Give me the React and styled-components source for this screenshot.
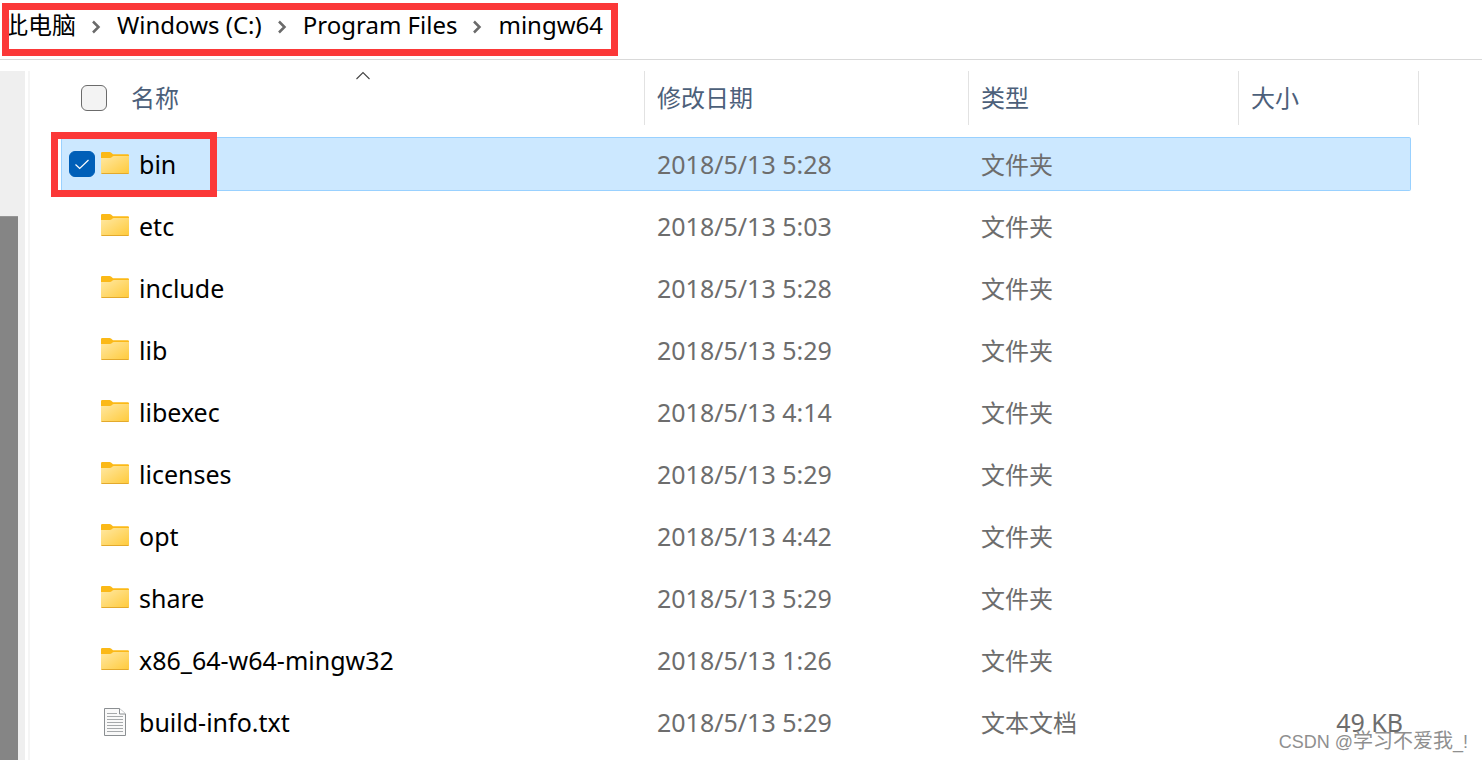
import React, { useState } from 'react';
import styled, { createGlobalStyle, css } from 'styled-components';

const GlobalStyle = createGlobalStyle`
  *, *::before, *::after { box-sizing: border-box; }
  body {
    margin: 0;
    background: #fff;
    color: #000;
    font-family: "Noto Sans", "Noto Sans CJK SC", sans-serif;
    font-size: 25px;
    line-height: 32px;
  }
`;

const RED = '#fb3838';

const Window = styled.div`
  position: relative;
  display: flex;
  flex-direction: column;
  min-height: 100vh;
  overflow: hidden;
`;

const AddressBar = styled.header`
  display: flex;
  padding: 3px 2px;
  border-bottom: 1px solid #d9d9d9;
`;

const Breadcrumb = styled.nav`
  display: flex;
  height: 53px;
  border: 7px solid ${RED};
  overflow: hidden;
`;

const Crumbs = styled.ol`
  display: flex;
  align-items: center;
  height: 30px;
  margin: 0 8px 0 -5px;
  padding: 0;
  list-style: none;
  font-size: 24px;
`;

const Crumb = styled.li`
  display: flex;
  align-items: center;
  white-space: nowrap;
`;

const CrumbLink = styled.a`
  color: #000;
  text-decoration: none;
`;

const CrumbChevron = styled.svg`
  width: 10px;
  height: 14px;
  margin: 4px 16px 0 15px;
`;

const Body = styled.div`
  display: flex;
  flex: 1;
  padding-top: 11px;
`;

const ScrollTrack = styled.div`
  display: flex;
  flex-direction: column;
  width: 25px;
  padding-top: 145px;
  background: #efefef;
`;

const ScrollThumb = styled.div`
  flex: 1;
  width: 18px;
  background: #858585;
  border-top: 1px solid #969696;
`;

const FilePane = styled.main`
  flex: 1;
  min-width: 0;
  margin-left: 3px;
  padding: 0 63px 0 31px;
  border-left: 2px solid #f5f5f5;
`;

const FileTable = styled.table`
  width: 100%;
  margin-top: -8px;
  table-layout: fixed;
  border-collapse: separate;
  border-spacing: 0 8px;
`;

const Column = styled.col`
  width: ${(p) => p.$width};
`;

const HeadCell = styled.th`
  height: 58px;
  padding: 0 0 4px;
  font-weight: 400;
  text-align: left;
`;

const HeadBox = styled.div`
  position: relative;
  display: flex;
  align-items: center;
  gap: 24px;
  height: 54px;
  padding-left: ${(p) => (p.$divider ? 12 : 0)}px;
  margin-left: ${(p) => (p.$divider ? 0 : 20)}px;
  border-left: ${(p) => (p.$divider ? '1px solid #e2e2e2' : 'none')};
`;

const EndDivider = styled.div`
  height: 54px;
  border-right: 1px solid #e2e2e2;
`;

const SortButton = styled.button`
  padding: 0;
  border: 0;
  background: none;
  color: #4c607a;
  font: inherit;
  font-size: 24px;
`;

const SortCaret = styled.svg`
  position: absolute;
  top: 0;
  left: 50%;
  width: 14px;
  height: 9px;
  margin-left: -7px;
`;

const CheckWrap = styled.label`
  position: relative;
  display: block;
  flex: none;
  width: 26px;
  height: 26px;

  svg {
    position: absolute;
    inset: 0;
    pointer-events: none;
  }
`;

const CheckInput = styled.input`
  appearance: none;
  display: block;
  width: 26px;
  height: 26px;
  margin: 0;
  border: 1px solid #6b6b6b;
  border-radius: 6px;
  background: #f3f3f3;
  opacity: ${(p) => (p.$quiet ? 0 : 1)};

  &:hover { opacity: 1; }

  &:checked {
    border-color: #005fb8;
    background: #005fb8;
    opacity: 1;
  }
`;

const selectedCell = css`
  background: #cce8ff;
  border-color: #99d1ff;
`;

const Cell = styled.td`
  height: 54px;
  padding: 0 8px 0 13px;
  border: 0 solid transparent;
  border-width: 1px 0;
  color: #6d6d6d;
  font-size: 25px;
  white-space: nowrap;
  ${(p) => p.$selected && selectedCell}
`;

const NameCell = styled(Cell)`
  position: relative;
  padding: 0 0 0 7px;
  border-left-width: 1px;
  color: #000;
`;

const TypeCell = styled(Cell)`
  padding-top: 2px;
  font-size: 24px;
`;

const SizeCell = styled(Cell)`
  padding-right: 7px;
  border-right-width: 1px;
  border-radius: 0 2px 2px 0;
  text-align: right;
`;

const NameBox = styled.div`
  display: flex;
  align-items: center;
`;

const IconSlot = styled.span`
  display: flex;
  align-items: center;
  justify-content: center;
  width: 28px;
  height: 30px;
  margin: 0 10px 0 6px;
`;

const HighlightFrame = styled.div`
  position: absolute;
  top: -6px;
  left: -11px;
  width: 166px;
  height: 65px;
  border: 7px solid ${RED};
  pointer-events: none;
`;

const Watermark = styled.div`
  position: absolute;
  right: 14px;
  bottom: 2px;
  color: #8f8f8f;
  font-family: "Liberation Sans", "Noto Sans CJK SC", sans-serif;
  font-size: 18px;
  text-shadow: 1px 1px 0 #fff;
  white-space: nowrap;
  pointer-events: none;
`;

const WatermarkName = styled.span`
  font-size: 20px;
`;

function FolderIcon() {
  return (
    <svg width="28" height="24" viewBox="0 0 28 24" aria-hidden="true">
      <defs>
        <linearGradient id="folder-face" x1="0" y1="0" x2="1" y2="1">
          <stop offset="0" stopColor="#ffe8a3" />
          <stop offset="1" stopColor="#ffca3a" />
        </linearGradient>
      </defs>
      <path d="M0 1.2Q0 0 1.2 0H8.6Q9.4 0 10 .6L12 2.3H26.8Q28 2.3 28 3.5V8H0Z" fill="#fbb917" />
      <path d="M0 6H9Q10 6 10.7 5.3L11.5 4.4Q12 4 12.8 4H28V21Q28 22 27 22H1Q0 22 0 21Z" fill="url(#folder-face)" />
      <path d="M.5 21.5H27.5" fill="none" stroke="#e3a92c" strokeWidth="1" />
    </svg>
  );
}

function TextFileIcon() {
  return (
    <svg width="22" height="28" viewBox="0 0 22 28" aria-hidden="true">
      <path d="M.5 .5H15.5L21.5 6V27.5H.5Z" fill="#f9f9f9" stroke="#8b8f92" />
      <path d="M15.5 .5V6H21.5" fill="#fff" stroke="#8b8f92" />
      <path d="M3 5.5H13M3 8.5H19M3 11.5H19M3 14.5H19M3 17.5H19M3 20.5H19M3 23.5H19" stroke="#a6a9ab" />
    </svg>
  );
}

function Check({ label, quiet, checked, onChange }) {
  return (
    <CheckWrap>
      <CheckInput
        type="checkbox"
        aria-label={label}
        $quiet={quiet}
        checked={checked}
        onChange={onChange}
      />
      {checked && (
        <svg width="26" height="26" viewBox="0 0 26 26" aria-hidden="true">
          <path d="M6.5 13.5L10.7 17.5L19.5 9" fill="none" stroke="#fff" strokeWidth="1.2" />
        </svg>
      )}
    </CheckWrap>
  );
}

const CRUMBS = ['此电脑', 'Windows (C:)', 'Program Files', 'mingw64'];

const FILES = [
  { name: 'bin', date: '2018/5/13 5:28', type: '文件夹', framed: true },
  { name: 'etc', date: '2018/5/13 5:03', type: '文件夹' },
  { name: 'include', date: '2018/5/13 5:28', type: '文件夹' },
  { name: 'lib', date: '2018/5/13 5:29', type: '文件夹' },
  { name: 'libexec', date: '2018/5/13 4:14', type: '文件夹' },
  { name: 'licenses', date: '2018/5/13 5:29', type: '文件夹' },
  { name: 'opt', date: '2018/5/13 4:42', type: '文件夹' },
  { name: 'share', date: '2018/5/13 5:29', type: '文件夹' },
  { name: 'x86_64-w64-mingw32', date: '2018/5/13 1:26', type: '文件夹' },
  { name: 'build-info.txt', date: '2018/5/13 5:29', type: '文本文档', size: '49 KB' },
];

function FileRow({ file, selected, onToggle }) {
  return (
    <tr>
      <NameCell $selected={selected}>
        <NameBox>
          <Check label={file.name} quiet checked={selected} onChange={onToggle} />
          <IconSlot>{file.size ? <TextFileIcon /> : <FolderIcon />}</IconSlot>
          {file.name}
        </NameBox>
        {file.framed && <HighlightFrame />}
      </NameCell>
      <Cell $selected={selected}>{file.date}</Cell>
      <TypeCell $selected={selected}>{file.type}</TypeCell>
      <SizeCell $selected={selected}>{file.size}</SizeCell>
    </tr>
  );
}

export default function App() {
  const [selected, setSelected] = useState(['bin']);
  const allSelected = selected.length === FILES.length;

  const toggle = (name) =>
    setSelected((now) => (now.includes(name) ? now.filter((n) => n !== name) : [...now, name]));

  return (
    <Window>
      <GlobalStyle />
      <AddressBar>
        <Breadcrumb>
          <Crumbs>
            {CRUMBS.map((crumb, i) => (
              <Crumb key={crumb}>
                {i > 0 && (
                  <CrumbChevron viewBox="0 0 10 14" aria-hidden="true">
                    <path d="M2 1.5L7.5 7L2 12.5" fill="none" stroke="#6a6a6a" strokeWidth="2.5" />
                  </CrumbChevron>
                )}
                <CrumbLink href="#">{crumb}</CrumbLink>
              </Crumb>
            ))}
          </Crumbs>
        </Breadcrumb>
      </AddressBar>
      <Body>
        <ScrollTrack>
          <ScrollThumb />
        </ScrollTrack>
        <FilePane>
          <FileTable>
            <colgroup>
              <Column $width="auto" />
              <Column $width="324px" />
              <Column $width="270px" />
              <Column $width="173px" />
              <Column $width="8px" />
            </colgroup>
            <thead>
              <tr>
                <HeadCell scope="col">
                  <HeadBox>
                    <Check
                      label="全选"
                      checked={allSelected}
                      onChange={() => setSelected(allSelected ? [] : FILES.map((f) => f.name))}
                    />
                    <SortButton type="button">名称</SortButton>
                    <SortCaret viewBox="0 0 14 9" aria-hidden="true">
                      <path d="M.5 8L7 1.5L13.5 8" fill="none" stroke="#444" strokeWidth="1.1" />
                    </SortCaret>
                  </HeadBox>
                </HeadCell>
                {['修改日期', '类型', '大小'].map((title) => (
                  <HeadCell key={title} scope="col">
                    <HeadBox $divider>
                      <SortButton type="button">{title}</SortButton>
                    </HeadBox>
                  </HeadCell>
                ))}
                <HeadCell as="td">
                  <EndDivider />
                </HeadCell>
              </tr>
            </thead>
            <tbody>
              {FILES.map((file) => (
                <FileRow
                  key={file.name}
                  file={file}
                  selected={selected.includes(file.name)}
                  onToggle={() => toggle(file.name)}
                />
              ))}
            </tbody>
          </FileTable>
        </FilePane>
      </Body>
      <Watermark>
        CSDN @<WatermarkName>学习不爱我</WatermarkName>_!
      </Watermark>
    </Window>
  );
}
